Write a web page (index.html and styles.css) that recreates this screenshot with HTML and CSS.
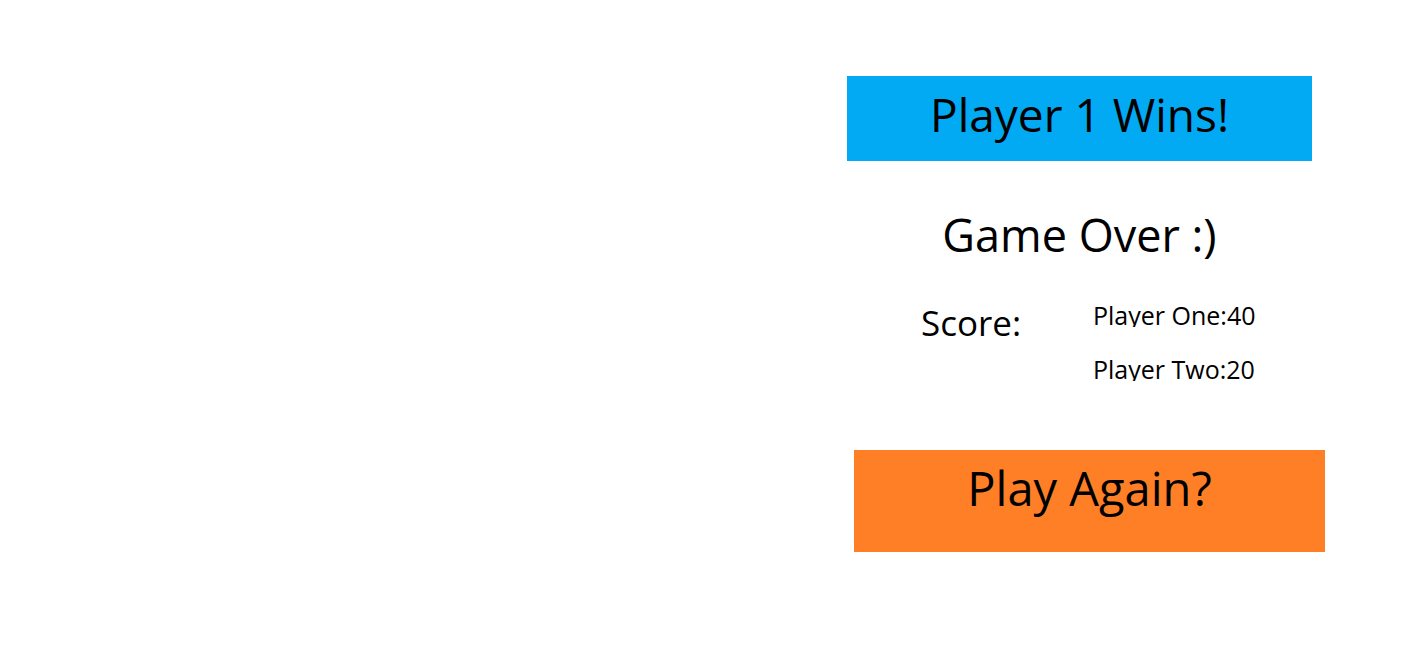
FILE: index.html
```html
<!DOCTYPE html>
<html lang="en">
<head>
<meta charset="utf-8">
<title>Game Over</title>
<link rel="stylesheet" href="styles.css">
</head>
<body>
<main class="panel">
  <div class="winner">Player 1 Wins!</div>
  <div class="game-over">Game Over :)</div>
  <div class="score-row">
    <div class="score-label">Score:</div>
    <div class="score-list">
      <div class="score-line">Player One:40</div>
      <div class="score-line">Player Two:20</div>
    </div>
  </div>
  <div class="play-again">Play Again?</div>
</main>
</body>
</html>
```

FILE: styles.css
```css
html, body {
  margin: 0;
  padding: 0;
  background: #ffffff;
}
body {
  font-family: "Open Sans", "Noto Sans", sans-serif;
  color: #000000;
}
.panel {
  display: flex;
  flex-direction: column;
  width: 465px;
  margin-left: 847px;
  padding-top: 76px;
}
.winner {
  box-sizing: border-box;
  height: 85px;
  padding-top: 10px;
  background: #02a9f3;
  font-size: 46px;
  line-height: 56px;
  text-align: center;
}
.game-over {
  margin-top: 46px;
  font-size: 45px;
  line-height: 56px;
  text-align: center;
}
.score-row {
  display: grid;
  grid-template-columns: 172px auto;
  margin-top: 38px;
  padding-left: 74px;
}
.score-label {
  margin-top: 2px;
  font-size: 35px;
  line-height: 40px;
}
.score-list {
  display: flex;
  flex-direction: column;
  gap: 28px;
}
.score-line {
  height: 26px;
  overflow: hidden;
  font-size: 25px;
  line-height: 28px;
  white-space: nowrap;
}
.play-again {
  box-sizing: border-box;
  width: 471px;
  height: 102px;
  margin-top: 69px;
  margin-left: 7px;
  padding-top: 10px;
  background: #ff7f27;
  font-size: 47px;
  line-height: 56px;
  text-align: center;
}
```
